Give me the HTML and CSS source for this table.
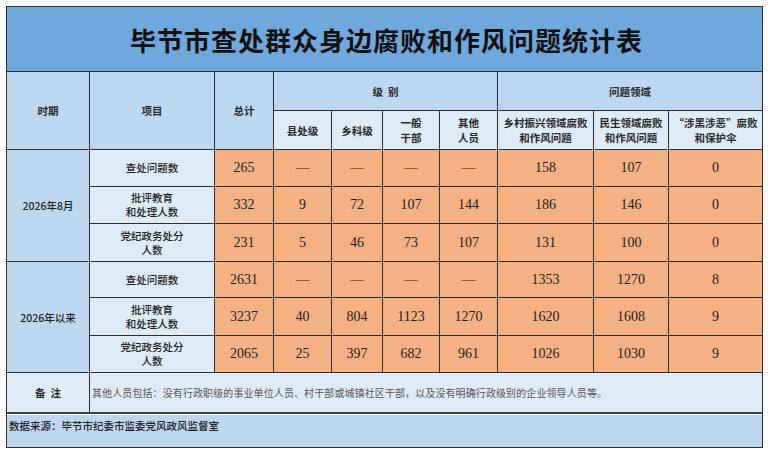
FILE: index.html
```html
<!DOCTYPE html>
<html lang="zh-CN">
<head>
<meta charset="utf-8">
<title>毕节市查处群众身边腐败和作风问题统计表</title>
<link rel="stylesheet" href="styles.css">
</head>
<body>
<table class="stat">
  <colgroup>
    <col class="c-period"><col class="c-item"><col class="c-total">
    <col class="c-lv1"><col class="c-lv2"><col class="c-lv3"><col class="c-lv4">
    <col class="c-f1"><col class="c-f2"><col class="c-f3">
  </colgroup>
  <tr class="r-title"><td colspan="10" class="title">毕节市查处群众身边腐败和作风问题统计表</td></tr>
  <tr class="r-head">
    <th rowspan="2" class="h1">时期</th>
    <th rowspan="2" class="h1">项目</th>
    <th rowspan="2" class="h1">总计</th>
    <th colspan="4" class="h1">级&nbsp;&nbsp;别</th>
    <th colspan="3" class="h1">问题领域</th>
  </tr>
  <tr class="r-head">
    <th class="h2">县处级</th>
    <th class="h2">乡科级</th>
    <th class="h2">一般<br>干部</th>
    <th class="h2">其他<br>人员</th>
    <th class="h2">乡村振兴领域腐败<br>和作风问题</th>
    <th class="h2">民生领域腐败<br>和作风问题</th>
    <th class="h2">“涉黑涉恶”腐败<br>和保护伞</th>
  </tr>
  <tr class="r-a">
    <td rowspan="3" class="period">2026年8月</td>
    <td class="item">查处问题数</td>
    <td class="num">265</td><td class="num">—</td><td class="num">—</td><td class="num">—</td><td class="num">—</td>
    <td class="num">158</td><td class="num">107</td><td class="num">0</td>
  </tr>
  <tr class="r-b">
    <td class="item">批评教育<br>和处理人数</td>
    <td class="num">332</td><td class="num">9</td><td class="num">72</td><td class="num">107</td><td class="num">144</td>
    <td class="num">186</td><td class="num">146</td><td class="num">0</td>
  </tr>
  <tr class="r-c">
    <td class="item">党纪政务处分<br>人数</td>
    <td class="num">231</td><td class="num">5</td><td class="num">46</td><td class="num">73</td><td class="num">107</td>
    <td class="num">131</td><td class="num">100</td><td class="num">0</td>
  </tr>
  <tr class="r-d">
    <td rowspan="3" class="period">2026年以来</td>
    <td class="item">查处问题数</td>
    <td class="num">2631</td><td class="num">—</td><td class="num">—</td><td class="num">—</td><td class="num">—</td>
    <td class="num">1353</td><td class="num">1270</td><td class="num">8</td>
  </tr>
  <tr class="r-e">
    <td class="item">批评教育<br>和处理人数</td>
    <td class="num">3237</td><td class="num">40</td><td class="num">804</td><td class="num">1123</td><td class="num">1270</td>
    <td class="num">1620</td><td class="num">1608</td><td class="num">9</td>
  </tr>
  <tr class="r-f">
    <td class="item">党纪政务处分<br>人数</td>
    <td class="num">2065</td><td class="num">25</td><td class="num">397</td><td class="num">682</td><td class="num">961</td>
    <td class="num">1026</td><td class="num">1030</td><td class="num">9</td>
  </tr>
  <tr class="r-note">
    <td class="note-label">备&nbsp;&nbsp;注</td>
    <td colspan="9" class="note">其他人员包括：没有行政职级的事业单位人员、村干部或城镇社区干部，以及没有明确行政级别的企业领导人员等。</td>
  </tr>
  <tr class="r-src">
    <td colspan="10" class="src">数据来源：毕节市纪委市监委党风政风监督室</td>
  </tr>
</table>
</body>
</html>
```
FILE: styles.css
```css
html, body {
  margin: 0;
  padding: 0;
  background: #ffffff;
}
body {
  padding: 6px;
  font-family: "Noto Sans CJK SC", "Noto Sans", sans-serif;
  color: #222;
}
.stat {
  border-collapse: collapse;
  table-layout: fixed;
  width: 756px;
  border: 1px solid #3a3f47;
}
.c-period { width: 83px; }
.c-item { width: 125px; }
.c-total { width: 59px; }
.c-lv1 { width: 58px; }
.c-lv2 { width: 51px; }
.c-lv3 { width: 57px; }
.c-lv4 { width: 58px; }
.c-f1 { width: 96px; }
.c-f2 { width: 75px; }
.c-f3 { width: 94px; }

.stat td, .stat th {
  border: 1px solid #2e2e2e;
  padding: 0;
  text-align: center;
  vertical-align: middle;
  overflow: hidden;
}
.r-title { height: 65px; }
.title {
  background: #6fa8dc;
  font-family: "Noto Sans CJK SC", sans-serif;
  font-weight: 700;
  font-size: 26px;
  letter-spacing: 1px;
  text-indent: 4px;
  color: #111;
  padding-top: 2px;
}
.r-head { height: 39px; }
.h1 {
  background: #bdd7ee;
  font-size: 10.5px;
  font-weight: 700;
  color: #2a2a2a;
}
.h2 {
  background: #ddebf7;
  font-size: 10.5px;
  font-weight: 700;
  line-height: 15px;
  color: #2a2a2a;
}
.r-a, .r-b { height: 37px; }
.r-c { height: 38px; }
.r-d { height: 36px; }
.r-e { height: 38px; }
.r-f { height: 37px; }
.period {
  background: #bdd7ee;
  font-size: 10.5px;
  font-weight: 500;
  color: #222;
}
.item {
  background: #ddebf7;
  font-size: 10.5px;
  font-weight: 500;
  line-height: 14px;
  color: #222;
}
.num {
  background: #f4b183;
  font-family: "Liberation Serif", "Times New Roman", serif;
  font-size: 14px;
  color: #1e1e1e;
}
.r-note { height: 40px; }
.note-label {
  background: #ddebf7;
  font-size: 10.5px;
  font-weight: 700;
  color: #222;
}
.note {
  background: #ddebf7;
  text-align: left !important;
  padding-left: 2px !important;
  font-size: 10px;
  letter-spacing: 0.1px;
  color: #555;
}
.r-src { height: 35px; }
.src {
  background: #bdd7ee;
  text-align: left !important;
  padding: 0 0 10px 2px !important;
  font-size: 10.5px;
  font-weight: 500;
  color: #222;
  border-top: 2px solid #3a3f47 !important;
  box-shadow: inset 0 1px 0 #ffffff;
}
```
